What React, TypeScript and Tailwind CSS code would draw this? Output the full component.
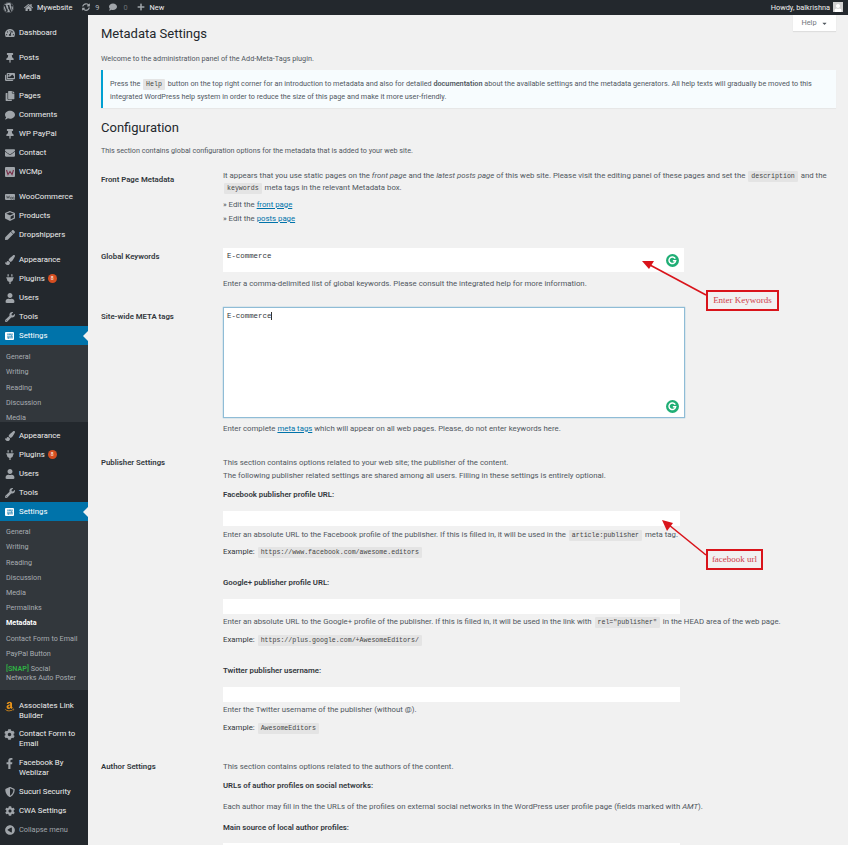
import React from "react";
import { FaWordpress, FaHome, FaSyncAlt, FaComment, FaPlus, FaTachometerAlt, FaThumbtack, FaImages, FaCopy, FaEnvelope, FaCube, FaPen, FaPaintBrush, FaPlug, FaUser, FaWrench, FaSlidersH, FaAmazon, FaCog, FaFacebookF, FaShieldAlt, FaPlayCircle, FaCaretDown } from "react-icons/fa";

type Ic = React.ComponentType<{ className?: string }>;

function WooIcon({ className }: { className?: string }) {
  return (
    <svg viewBox="0 0 12 8" className={className}>
      <rect width="12" height="7" y="0.5" rx="1" fill="currentColor" />
      <path d="M2 2.5l.7 3 1-2.2 1 2.2.7-3M7.5 4.2a.9 1.2 0 1 0 .01 0M10 4.2a.9 1.2 0 1 0 .01 0" fill="none" stroke="#23282d" strokeWidth="0.6" />
    </svg>
  );
}

function WcmpIcon({ className }: { className?: string }) {
  return (
    <svg viewBox="0 0 10 10" className={className}>
      <rect width="10" height="10" rx="1" fill="currentColor" />
      <path d="M1.5 3l1.5 4.5 2-3 2 3L8.5 3" fill="none" stroke="#7a2f4a" strokeWidth="1.1" />
    </svg>
  );
}

function Item({ icon: I, label, badge, cls = "text-[#a0a5aa]" }: { icon: Ic; label: string; badge?: boolean; cls?: string }) {
  return (
    <div className="flex h-[19px] items-center text-[7.8px] text-[#eeeeee]">
      <span className="flex w-[19px] justify-center"><I className={`h-[10px] w-[10px] ${cls}`} /></span>
      <span>{label}</span>
      {badge && <span className="ml-[3px] flex h-[9px] w-[9px] items-center justify-center rounded-full bg-[#d54e21] text-[5px] text-white">8</span>}
    </div>
  );
}

function TwoLine({ icon: I, a, b, cls = "text-[#a0a5aa]", mt }: { icon: Ic; a: string; b: string; cls?: string; mt: string }) {
  return (
    <div className={`flex items-start text-[7.8px] leading-[10px] text-[#eeeeee] ${mt}`}>
      <span className="flex h-[10px] w-[19px] justify-center"><I className={`h-[11px] w-[11px] ${cls}`} /></span>
      <span>{a}<br />{b}</span>
    </div>
  );
}

function Active() {
  return (
    <div className="relative flex h-[19px] items-center bg-[#0073aa] text-[7.8px] text-white">
      <span className="flex w-[19px] justify-center">
        <span className="flex h-[8px] w-[9px] items-center justify-center rounded-[1px] bg-white"><FaSlidersH className="h-[6px] w-[6px] text-[#0073aa]" /></span>
      </span>
      <span>Settings</span>
      <span className="absolute right-0 top-[5px] h-0 w-0 border-y-[5px] border-r-[5px] border-y-transparent border-r-[#f1f1f1]" />
    </div>
  );
}

function Sub({ t, bold }: { t: React.ReactNode; bold?: boolean }) {
  return <div className={`flex h-[15.2px] items-center pl-[6px] text-[7.2px] ${bold ? "font-bold text-white" : "text-[#a8adb2]"}`}>{t}</div>;
}

function Code({ children }: { children: React.ReactNode }) {
  return <code className="mx-[1px] rounded-[1px] bg-[#e4e4e4] px-[3px] py-[2px] font-['Liberation_Mono',monospace] text-[6.6px] text-[#444]">{children}</code>;
}

function Line({ children, mt, bold }: { children: React.ReactNode; mt: string; bold?: boolean }) {
  return <p className={`h-[12px] whitespace-nowrap leading-[14px] ${mt} ${bold ? "font-semibold text-[#32373c]" : ""}`}>{children}</p>;
}

function Row({ label, labelPt, mt, children }: { label: string; labelPt: string; mt: string; children: React.ReactNode }) {
  return (
    <div className={`grid grid-cols-[122px_1fr] ${mt}`}>
      <div className={`font-semibold leading-[14px] text-[#32373c] ${labelPt}`}>{label}</div>
      <div>{children}</div>
    </div>
  );
}

function Grammarly() {
  return (
    <svg viewBox="0 0 14 14" className="absolute right-[5px] h-[13px] w-[13px]">
      <circle cx="7" cy="7" r="7" fill="#1fae75" />
      <path d="M10 5a3.6 3.6 0 1 0 .4 2.2H7.4" fill="none" stroke="#fff" strokeWidth="1.6" />
    </svg>
  );
}

function Annotations() {
  return (
    <>
      <svg className="pointer-events-none absolute left-0 top-0 h-[845px] w-[848px]" viewBox="0 0 848 845">
        <path d="M706 295 L650 265" stroke="#d9141b" strokeWidth="1.6" fill="none" />
        <path d="M642 261 L654 261 L649 269 Z" fill="#d9141b" />
        <path d="M706 555 L669 525" stroke="#d9141b" strokeWidth="1.6" fill="none" />
        <path d="M662 520 L673 523 L667 531 Z" fill="#d9141b" />
      </svg>
      <div className="absolute left-[706px] top-[290px] flex h-[21px] w-[73px] items-center justify-center border-2 border-[#d9141b] font-['Liberation_Serif',serif] text-[9px] text-[#d0404a]">Enter Keywords</div>
      <div className="absolute left-[706px] top-[549px] flex h-[21px] w-[57px] items-center justify-center border-2 border-[#d9141b] font-['Liberation_Serif',serif] text-[9px] text-[#d0404a]">facebook url</div>
    </>
  );
}

export default function App() {
  return (
    <div className="relative h-[845px] w-[848px] overflow-hidden bg-[#f1f1f1] font-['Roboto',sans-serif]">
      <header className="flex h-[15px] items-center justify-between bg-[#23282d] text-[7.35px] text-[#eeeeee]">
        <div className="flex items-center">
          <FaWordpress className="ml-[3px] h-[11px] w-[11px] text-[#a0a5aa]" />
          <FaHome className="ml-[10px] h-[9px] w-[9px] text-[#a0a5aa]" />
          <span className="ml-[4px]">Mywebsite</span>
          <FaSyncAlt className="ml-[10px] h-[8px] w-[8px] text-[#a0a5aa]" />
          <span className="ml-[5px] text-[#b4b9be]">9</span>
          <FaComment className="ml-[10px] h-[8px] w-[8px] text-[#a0a5aa]" />
          <span className="ml-[6px] text-[#6b7075]">0</span>
          <FaPlus className="ml-[9px] h-[8px] w-[8px] text-[#a0a5aa]" />
          <span className="ml-[5px]">New</span>
        </div>
        <div className="mr-[5px] flex items-center">
          <span>Howdy, balkrishna</span>
          <span className="ml-[3px] flex h-[10px] w-[10px] items-end justify-center bg-[#d0d0d0]"><FaUser className="h-[8px] w-[8px] text-white" /></span>
        </div>
      </header>

      <div className="flex h-[830px]">
        <nav className="w-[88px] shrink-0 bg-[#23282d] pt-[8px]">
          <Item icon={FaTachometerAlt} label="Dashboard" />
          <div className="mt-[6px]">
            <Item icon={FaThumbtack} label="Posts" />
            <Item icon={FaImages} label="Media" />
            <Item icon={FaCopy} label="Pages" />
            <Item icon={FaComment} label="Comments" />
            <Item icon={FaThumbtack} label="WP PayPal" />
            <Item icon={FaEnvelope} label="Contact" />
            <Item icon={WcmpIcon} label="WCMp" />
          </div>
          <div className="mt-[6px]">
            <Item icon={WooIcon} label="WooCommerce" />
            <Item icon={FaCube} label="Products" />
            <Item icon={FaPen} label="Dropshippers" />
          </div>
          <div className="mt-[6px]">
            <Item icon={FaPaintBrush} label="Appearance" />
            <Item icon={FaPlug} label="Plugins" badge />
            <Item icon={FaUser} label="Users" />
            <Item icon={FaWrench} label="Tools" />
            <Active />
          </div>
          <div className="h-[77px] overflow-hidden bg-[#32373c] pt-[5px]">
            {["General", "Writing", "Reading", "Discussion", "Media"].map((t) => <Sub key={t} t={t} />)}
          </div>
          <div className="mt-[4px]">
            <Item icon={FaPaintBrush} label="Appearance" />
            <Item icon={FaPlug} label="Plugins" badge />
            <Item icon={FaUser} label="Users" />
            <Item icon={FaWrench} label="Tools" />
            <Active />
          </div>
          <div className="h-[169px] bg-[#32373c] pt-[4px]">
            {["General", "Writing", "Reading", "Discussion", "Media", "Permalinks"].map((t) => <Sub key={t} t={t} />)}
            <Sub t="Metadata" bold />
            <Sub t="Contact Form to Email" />
            <Sub t="PayPal Button" />
            <div className="pl-[6px] pt-[2px] text-[7.2px] leading-[9px] text-[#a8adb2]"><span className="font-semibold text-[#2fb344]">[SNAP]</span> Social<br />Networks Auto Poster</div>
          </div>
          <TwoLine icon={FaAmazon} cls="text-[#e8941a]" a="Associates Link" b="Builder" mt="mt-[11px]" />
          <TwoLine icon={FaCog} a="Contact Form to" b="Email" mt="mt-[8px]" />
          <TwoLine icon={FaFacebookF} a="Facebook By" b="Weblizar" mt="mt-[9px]" />
          <div className="mt-[4px]">
            <Item icon={FaShieldAlt} label="Sucuri Security" />
            <Item icon={FaCog} label="CWA Settings" />
          </div>
          <div className="flex h-[19px] items-center text-[7.4px] text-[#a0a5aa]">
            <span className="flex w-[19px] justify-center"><FaPlayCircle className="h-[10px] w-[10px] rotate-180 text-[#a0a5aa]" /></span>
            <span>Collapse menu</span>
          </div>
        </nav>

        <main className="min-w-0 flex-1 pl-[13px] pr-[12px] text-[7.8px] text-[#50575e]">
          <h1 className="mt-[9px] text-[13px] leading-[20px] text-[#23282d]">Metadata Settings</h1>
          <div className="mt-[8px] text-[7.25px]"><Line mt="mt-0">Welcome to the administration panel of the Add-Meta-Tags plugin.</Line></div>
          <div className="mt-[6px] h-[38px] border-l-[2px] border-[#00a0d2] bg-[#f7fcfe] pl-[7px] pt-[8px] text-[7.25px] leading-[12px] shadow-[0_1px_1px_rgba(0,0,0,0.04)]">
            <p className="whitespace-nowrap">Press the <Code>Help</Code> button on the top right corner for an introduction to metadata and also for detailed <b className="font-semibold">documentation</b> about the available settings and the metadata generators. All help texts will gradually be moved to this</p>
            <p className="whitespace-nowrap">integrated WordPress help system in order to reduce the size of this page and make it more user-friendly.</p>
          </div>
          <h2 className="mt-[10px] text-[13px] leading-[20px] text-[#23282d]">Configuration</h2>
          <div className="mt-[6px] text-[7.2px]"><Line mt="mt-0">This section contains global configuration options for the metadata that is added to your web site.</Line></div>

          <Row label="Front Page Metadata" labelPt="pt-[4px]" mt="mt-[13px]">
            <Line mt="mt-0">It appears that you use static pages on the <i>front page</i> and the <i>latest posts page</i> of this web site. Please visit the editing panel of these pages and set the <Code>description</Code> and the</Line>
            <Line mt="mt-0"><Code>keywords</Code> meta tags in the relevant Metadata box.</Line>
            <Line mt="mt-[5px]">» Edit the <a className="text-[#0073aa] underline">front page</a></Line>
            <Line mt="mt-[2px]">» Edit the <a className="text-[#0073aa] underline">posts page</a></Line>
          </Row>

          <Row label="Global Keywords" labelPt="pt-[2px]" mt="mt-[24px]">
            <div className="relative flex h-[24px] w-[461px] items-center bg-white">
              <span className="absolute left-[4px] top-[2px] font-['Liberation_Mono',monospace] text-[7.4px] leading-[12px] text-[#32373c]">E-commerce</span>
              <Grammarly />
            </div>
            <Line mt="mt-[5px]">Enter a comma-delimited list of global keywords. Please consult the integrated help for more information.</Line>
          </Row>

          <Row label="Site-wide META tags" labelPt="pt-[3px]" mt="mt-[18px]">
            <div className="relative flex h-[111px] w-[462px] items-end border border-[#8fbcd6] bg-white pb-[4px] shadow-[0_0_1px_rgba(30,140,190,0.6)]">
              <span className="absolute left-[3px] top-[2px] font-['Liberation_Mono',monospace] text-[7.4px] leading-[12px] text-[#32373c]">E-commerce<span className="border-l border-[#333]" /></span>
              <Grammarly />
            </div>
            <Line mt="mt-[4px]">Enter complete <a className="text-[#0073aa] underline">meta tags</a> which will appear on all web pages. Please, do not enter keywords here.</Line>
          </Row>

          <Row label="Publisher Settings" labelPt="pt-0" mt="mt-[22px]">
            <Line mt="mt-0">This section contains options related to your web site; the publisher of the content.</Line>
            <Line mt="mt-[1px]">The following publisher related settings are shared among all users. Filling in these settings is entirely optional.</Line>
            <Line mt="mt-[7px]" bold>Facebook publisher profile URL:</Line>
            <div className="mt-[11px] h-[15px] w-[457px] bg-white" />
            <Line mt="mt-[2px]">Enter an absolute URL to the Facebook profile of the publisher. If this is filled in, it will be used in the <Code>article:publisher</Code> meta tag.</Line>
            <Line mt="mt-[5px]"><span className="text-[#32373c]">Example:</span> <Code>https://www.facebook.com/awesome.editors</Code></Line>
            <Line mt="mt-[19px]" bold>Google+ publisher profile URL:</Line>
            <div className="mt-[11px] h-[15px] w-[457px] bg-white" />
            <Line mt="mt-[1px]">Enter an absolute URL to the Google+ profile of the publisher. If this is filled in, it will be used in the link with <Code>rel="publisher"</Code> in the HEAD area of the web page.</Line>
            <Line mt="mt-[6px]"><span className="text-[#32373c]">Example:</span> <Code>https://plus.google.com/+AwesomeEditors/</Code></Line>
            <Line mt="mt-[19px]" bold>Twitter publisher username:</Line>
            <div className="mt-[11px] h-[15px] w-[457px] bg-white" />
            <Line mt="mt-[1px]">Enter the Twitter username of the publisher (without @).</Line>
            <Line mt="mt-[6px]"><span className="text-[#32373c]">Example:</span> <Code>AwesomeEditors</Code></Line>
          </Row>

          <Row label="Author Settings" labelPt="pt-0" mt="mt-[27px]">
            <Line mt="mt-0">This section contains options related to the authors of the content.</Line>
            <Line mt="mt-[7px]" bold>URLs of author profiles on social networks:</Line>
            <Line mt="mt-[9px]">Each author may fill in the the URLs of the profiles on external social networks in the WordPress user profile page (fields marked with <i>AMT</i>).</Line>
            <Line mt="mt-[9px]" bold>Main source of local author profiles:</Line>
            <div className="mt-[10px] h-[16px] w-[457px] bg-white" />
          </Row>
        </main>
      </div>

      <div className="absolute left-[793px] top-[15px] flex h-[16px] w-[43px] items-center justify-center gap-[4px] bg-white text-[7.4px] text-[#72777c] shadow-[0_1px_1px_rgba(0,0,0,0.08)]">
        Help <FaCaretDown className="h-[7px] w-[7px] text-[#50575e]" />
      </div>
      <Annotations />
    </div>
  );
}
